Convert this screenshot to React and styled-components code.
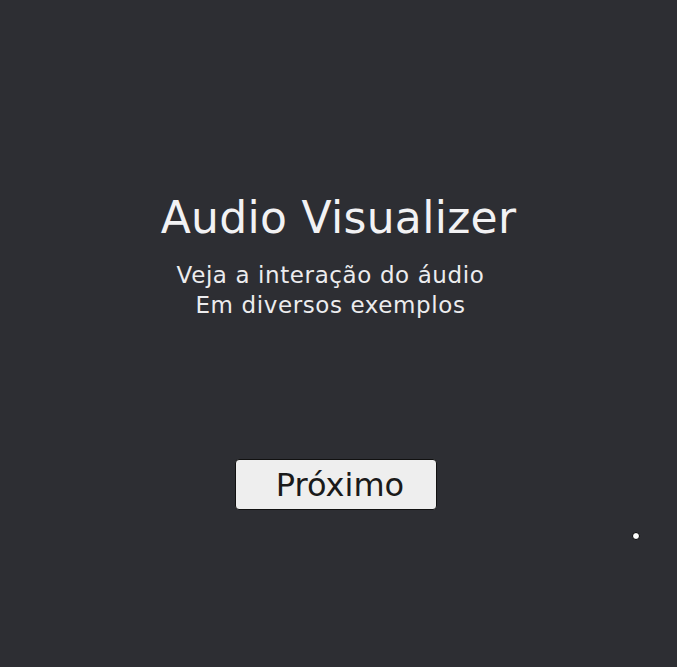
import React from "react";
import styled, { createGlobalStyle } from "styled-components";

const Global = createGlobalStyle`
  html, body { margin: 0; padding: 0; background: #2d2e33; }
  body { font-family: "DejaVu Sans", "Liberation Sans", sans-serif; }
`;

const Page = styled.div`
  position: relative;
  width: 677px;
  height: 667px;
  background: #2d2e33;
  display: flex;
  flex-direction: column;
  align-items: center;
  padding-top: 190px;
  box-sizing: border-box;
  overflow: hidden;
`;

const Title = styled.h1`
  margin: 0;
  font-size: 44px;
  font-weight: normal;
  color: #f2f2f4;
  line-height: 56px;
  letter-spacing: 0.3px;
`;

const Subtitle = styled.p`
  margin: 14px 16px 0 0;
  font-size: 23px;
  line-height: 30px;
  color: #ececee;
  text-align: center;
  letter-spacing: 0.6px;
`;

const Button = styled.button`
  margin: 139px 5px 0 0;
  width: 202px;
  height: 51px;
  background: #eeeeee;
  border: 1px solid #111;
  border-radius: 4px;
  font-family: inherit;
  font-size: 32px;
  color: #1a1a1a;
  padding: 0 0 0 8px;
  cursor: pointer;
`;

const Dot = styled.div`
  position: absolute;
  left: 632px;
  top: 532px;
  width: 6px;
  height: 6px;
  border-radius: 50%;
  background: #fff;
  border: 1px solid #000;
`;

export default function App() {
  return (
    <>
      <Global />
      <Page>
        <Title>Audio Visualizer</Title>
        <Subtitle>
          Veja a interação do áudio
          <br />
          Em diversos exemplos
        </Subtitle>
        <Button>Próximo</Button>
        <Dot />
      </Page>
    </>
  );
}
